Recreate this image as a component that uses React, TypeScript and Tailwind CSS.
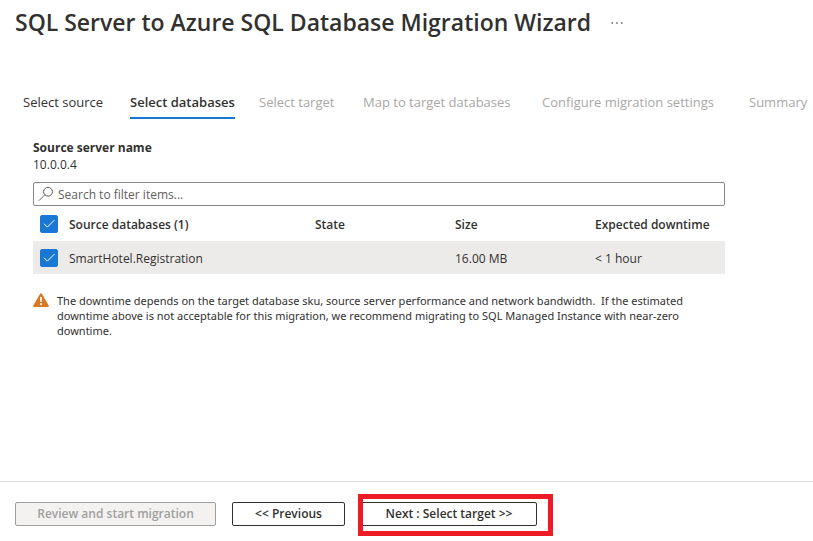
import { useState } from "react";
import clsx from "clsx";

const tabs = [
  { label: "Select source", width: "w-[107px]" },
  { label: "Select databases", width: "w-[129px]" },
  { label: "Select target", width: "w-[104px]" },
  { label: "Map to target databases", width: "w-[179px]" },
  { label: "Configure migration settings", width: "w-[207px]" },
  { label: "Summary", width: "w-[60px]" },
];

const databases = [
  {
    name: "SmartHotel.Registration",
    state: "",
    size: "16.00 MB",
    downtime: "< 1 hour",
  },
];

function Checkbox({
  label,
  checked,
  onChange,
}: {
  label: string;
  checked: boolean;
  onChange: (checked: boolean) => void;
}) {
  return (
    <label className="grid size-[18px] cursor-pointer">
      <input
        type="checkbox"
        aria-label={label}
        checked={checked}
        onChange={(e) => onChange(e.target.checked)}
        className="peer col-start-1 row-start-1 size-[18px] appearance-none rounded-xs border border-[#323130] bg-white checked:border-[#1978d4] checked:bg-[#1978d4]"
      />
      <svg
        viewBox="0 0 18 18"
        className="pointer-events-none col-start-1 row-start-1 hidden size-[18px] peer-checked:block"
        fill="none"
        stroke="white"
        strokeWidth="1"
      >
        <path d="M4 8.700 7.400 12.100 14.400 5.100" />
      </svg>
    </label>
  );
}

export default function App() {
  const [filter, setFilter] = useState("");
  const [selected, setSelected] = useState<string[]>([
    "SmartHotel.Registration",
  ]);

  const rows = databases.filter((db) =>
    db.name.toLowerCase().includes(filter.toLowerCase())
  );

  const toggle = (name: string, checked: boolean) => {
    setSelected(
      checked ? [...selected, name] : selected.filter((n) => n !== name)
    );
  };

  return (
    <div className="flex min-h-screen flex-col overflow-hidden bg-white font-['Open_Sans','Noto_Sans',sans-serif] text-xs text-[#323130]">
      <header className="flex items-center gap-4 px-[15px] pt-2">
        <h1 className="text-[23px] leading-7 font-semibold whitespace-nowrap">
          SQL Server to Azure SQL Database Migration Wizard
        </h1>
        <button type="button" aria-label="More actions" className="p-1">
          <svg viewBox="0 0 12 12" className="size-3" fill="#323130">
            <circle cx="1.2" cy="7" r="0.8" />
            <circle cx="6" cy="7" r="0.8" />
            <circle cx="10.8" cy="7" r="0.8" />
          </svg>
        </button>
      </header>

      <nav className="mt-[57px] flex pl-[23px] text-[13px] leading-[18px]">
        {tabs.map((tab, i) => (
          <div key={tab.label} className={clsx("shrink-0", tab.width)}>
            <button
              type="button"
              disabled={i > 1}
              className={clsx(
                "border-b-2 pb-[6px] whitespace-nowrap",
                i === 1 ? "border-[#1978d4] font-semibold" : "border-transparent",
                i > 1 && "text-[#a9a7a5]"
              )}
            >
              {tab.label}
            </button>
          </div>
        ))}
      </nav>

      <main className="mr-[88px] ml-[33px] flex-1 pt-[21px]">
        <h2 className="leading-4 font-bold">Source server name</h2>
        <p className="leading-[18px]">10.0.0.4</p>

        <label className="mt-2 flex h-6 items-center gap-1 rounded-xs border border-[#8a8886] px-1">
          <svg
            viewBox="0 0 16 16"
            className="size-4 shrink-0"
            fill="none"
            stroke="#605e5c"
            strokeWidth="1"
          >
            <circle cx="10" cy="5.700" r="4.400" />
            <path d="M6.800 8.800 1 14.600" />
          </svg>
          <input
            type="text"
            aria-label="Search to filter items"
            placeholder="Search to filter items..."
            value={filter}
            onChange={(e) => setFilter(e.target.value)}
            className="min-w-0 flex-1 pt-0.5 outline-none placeholder:text-[#605e5c]"
          />
        </label>

        <table className="w-full table-fixed text-left">
          <thead>
            <tr className="h-[35px]">
              <th className="w-9 pl-[7px]">
                <Checkbox
                  label="Select all databases"
                  checked={selected.length === databases.length}
                  onChange={(checked) =>
                    setSelected(checked ? databases.map((db) => db.name) : [])
                  }
                />
              </th>
              <th className="pt-0.5 font-semibold">
                Source databases ({databases.length})
              </th>
              <th className="w-[140px] pt-0.5 font-semibold">State</th>
              <th className="w-[140px] pt-0.5 font-semibold">Size</th>
              <th className="w-[130px] pt-0.5 font-semibold whitespace-nowrap">
                Expected downtime
              </th>
            </tr>
          </thead>
          <tbody>
            {rows.map((db) => (
              <tr key={db.name} className="h-[33px] bg-[#edebe9]">
                <td className="pl-[7px]">
                  <Checkbox
                    label={db.name}
                    checked={selected.includes(db.name)}
                    onChange={(checked) => toggle(db.name, checked)}
                  />
                </td>
                <td className="pt-0.5">{db.name}</td>
                <td className="pt-0.5">{db.state}</td>
                <td className="pt-0.5">{db.size}</td>
                <td className="pt-0.5">{db.downtime}</td>
              </tr>
            ))}
          </tbody>
        </table>

        <div className="mt-[18px] flex items-start gap-2">
          <svg viewBox="0 0 16 16" className="size-4 shrink-0">
            <path
              d="M8 1.200c.4 0 .7.2.9.6l6.800 11.800c.4.7 0 1.400-.8 1.400H1.100c-.8 0-1.200-.7-.8-1.400L7.100 1.800c.2-.4.5-.6.9-.6Z"
              fill="#db7823"
            />
            <path d="M7 5h2l-.3 5H7.300z" fill="white" />
            <circle cx="8" cy="12.200" r="1.100" fill="white" />
          </svg>
          <p className="pt-px font-['Noto_Sans',sans-serif] text-[11px] leading-[15px]">
            The downtime depends on the target database sku, source server
            performance and network bandwidth.&nbsp; If the estimated downtime
            above is not acceptable for this migration, we recommend migrating
            to SQL Managed Instance with near-zero downtime.
          </p>
        </div>
      </main>

      <footer className="flex gap-4 border-t border-[#dfdfdf] px-[15px] pt-5 pb-[15px] font-semibold whitespace-nowrap">
        <button
          type="button"
          disabled
          className="h-6 w-[201px] rounded-xs border border-[#a19f9d] bg-[#f3f2f1] leading-5 text-[#a19f9d]"
        >
          Review and start migration
        </button>
        <button
          type="button"
          className="h-6 w-[113px] rounded-xs border border-[#323130] leading-5"
        >
          &lt;&lt; Previous
        </button>
        <div className="relative">
          <button
            type="button"
            className="h-6 w-44 rounded-xs border border-[#323130] leading-5"
          >
            Next : Select target &gt;&gt;
          </button>
          <div className="pointer-events-none absolute -top-2 -right-4 -bottom-[10px] -left-[3px] border-[5px] border-[#ed1c24]" />
        </div>
      </footer>
    </div>
  );
}
